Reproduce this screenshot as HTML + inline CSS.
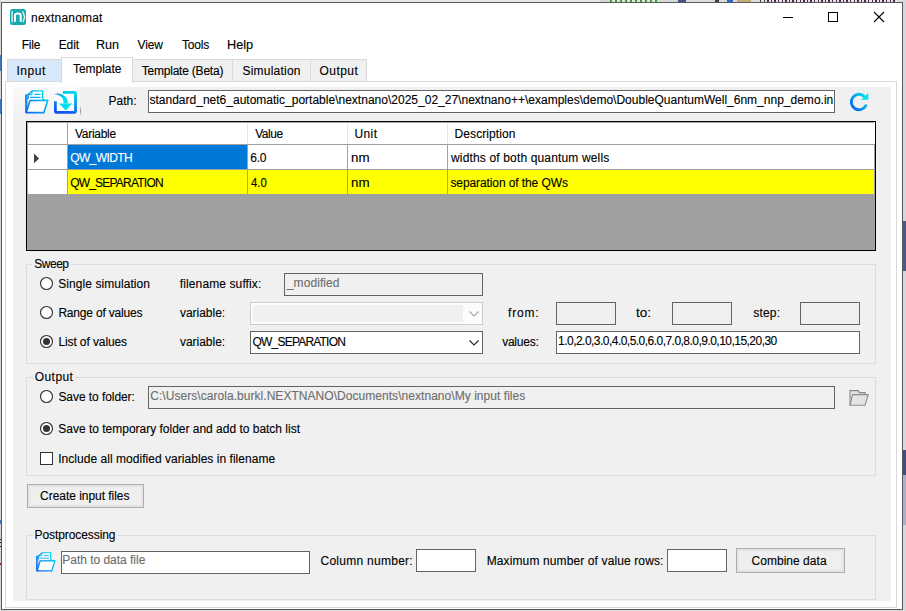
<!DOCTYPE html><html><head><meta charset="utf-8"><title>nextnanomat</title><style>
html,body{margin:0;padding:0;}
body{width:906px;height:611px;position:relative;overflow:hidden;background:#dcdde3;font-family:"Liberation Sans",sans-serif;font-size:12px;}
.t{position:absolute;white-space:nowrap;line-height:14px;font-size:12px;font-family:"Liberation Sans",sans-serif;-webkit-text-stroke:0.12px currentColor;}
svg{position:absolute;overflow:visible}
</style></head><body>
<div style="position:absolute;left:0px;top:0px;width:906px;height:2px;background:#e6e6e6"></div>
<div style="position:absolute;left:600px;top:0px;width:10px;height:2px;background:#d4d4d4"></div>
<div style="position:absolute;left:610px;top:0px;width:47px;height:2px;background:repeating-linear-gradient(90deg,#3f9a3f 0 2px,#dfe9df 2px 5px)"></div>
<div style="position:absolute;left:657px;top:0px;width:21px;height:2px;background:#d8d8d8"></div>
<div style="position:absolute;left:678px;top:0px;width:8px;height:2px;background:#45558a"></div>
<div style="position:absolute;left:686px;top:0px;width:29px;height:2px;background:#dcdcdc"></div>
<div style="position:absolute;left:715px;top:0px;width:4px;height:2px;background:#404040"></div>
<div style="position:absolute;left:719px;top:0px;width:8px;height:2px;background:#dcdcdc"></div>
<div style="position:absolute;left:727px;top:0px;width:6px;height:2px;background:#2a6ad0"></div>
<div style="position:absolute;left:733px;top:0px;width:4px;height:2px;background:#dcdcdc"></div>
<div style="position:absolute;left:737px;top:0px;width:14px;height:2px;background:#c4ac74"></div>
<div style="position:absolute;left:751px;top:0px;width:9px;height:2px;background:#dcdcdc"></div>
<div style="position:absolute;left:760px;top:0px;width:137px;height:2px;background:repeating-linear-gradient(90deg,#4a2a4a 0 1.5px,#e6e6e6 1.5px 3.6px)"></div>
<div style="position:absolute;left:897px;top:0px;width:9px;height:2px;background:#dcdcdc"></div>
<div style="position:absolute;left:903px;top:0px;width:3px;height:611px;background:#d6d7de"></div>
<div style="position:absolute;left:903px;top:221px;width:3px;height:50px;background:#4a5a8c"></div>
<div style="position:absolute;left:903px;top:450px;width:3px;height:25px;background:#3f4f86"></div>
<div style="position:absolute;left:903px;top:475px;width:3px;height:50px;background:#aab0cc"></div>
<div style="position:absolute;left:0px;top:610px;width:906px;height:1px;background:#d8d8d8"></div>
<div style="position:absolute;left:0px;top:0px;width:1px;height:611px;background:#d4d4d4"></div>
<div style="position:absolute;left:0px;top:55px;width:1px;height:16px;background:#3a78c0"></div>
<div style="position:absolute;left:0px;top:99px;width:1px;height:15px;background:#3a78c0"></div>
<div style="position:absolute;left:0px;top:520px;width:1px;height:4px;background:#3a78c0"></div>
<div style="position:absolute;left:0px;top:539px;width:1px;height:1px;background:#202020"></div>
<div style="position:absolute;left:0px;top:542px;width:1px;height:1px;background:#202020"></div>
<div style="position:absolute;left:0px;top:546px;width:1px;height:1px;background:#202020"></div>
<div style="position:absolute;left:0px;top:563px;width:1px;height:2px;background:#a02020"></div>
<div style="position:absolute;left:1px;top:2px;width:902px;height:608px;box-sizing:border-box;border:1px solid #5a5a5a;background:#ffffff"></div>
<svg style="left:10px;top:9px" width="16" height="16" viewBox="10 9 16 16">
<rect x="10" y="9" width="16" height="16" rx="2.5" fill="#17a8b0"/>
<rect x="11.3" y="11.1" width="1.6" height="11.3" fill="#fff" opacity="0.75"/>
<path d="M15 21.8 V15.2 C15 13.9 15.8 13.6 17.85 13.6 C19.9 13.6 20.7 13.9 20.7 15.2 V21.8" fill="none" stroke="#fff" stroke-width="2"/>
<path d="M22.5 11.4 Q24 14 24.5 16.8 Q24 19.8 23 22.3" fill="none" stroke="#fff" stroke-width="1.3" opacity="0.9"/>
</svg>
<div class="t" style="left:31.06px;top:11px;color:#000;letter-spacing:0.198px;">nextnanomat</div>
<div style="position:absolute;left:783px;top:17px;width:10px;height:1px;background:#000"></div>
<div style="position:absolute;left:828px;top:12px;width:10px;height:10px;box-sizing:border-box;border:1px solid #000;background:transparent"></div>
<svg style="left:873px;top:11px" width="12" height="12" viewBox="873 11 12 12">
<path d="M874 12 L884 22 M884 12 L874 22" stroke="#000" stroke-width="1.1" fill="none"/></svg>
<div class="t" style="left:21.7px;top:38px;color:#000;letter-spacing:-0.189px;">File</div>
<div class="t" style="left:58.7px;top:38px;color:#000;letter-spacing:-0.081px;">Edit</div>
<div class="t" style="left:96.45px;top:38px;color:#000;transform:scaleX(1.0468);transform-origin:0 0;">Run</div>
<div class="t" style="left:137.47px;top:38px;color:#000;letter-spacing:-0.111px;">View</div>
<div class="t" style="left:181.97px;top:38px;color:#000;letter-spacing:-0.174px;">Tools</div>
<div class="t" style="left:226.93px;top:38px;color:#000;transform:scaleX(1.0613);transform-origin:0 0;">Help</div>
<div style="position:absolute;left:5px;top:81px;width:892px;height:527px;box-sizing:border-box;border:1px solid #d9d9d9;background:#ffffff"></div>
<div style="position:absolute;left:7px;top:59px;width:55px;height:23px;box-sizing:border-box;border:1px solid #d9d9d9;background:#d8eaf9"></div>
<div style="position:absolute;left:132px;top:59px;width:101px;height:23px;box-sizing:border-box;border:1px solid #d9d9d9;background:#f0f0f0"></div>
<div style="position:absolute;left:232px;top:59px;width:79px;height:23px;box-sizing:border-box;border:1px solid #d9d9d9;background:#f0f0f0"></div>
<div style="position:absolute;left:310px;top:59px;width:57px;height:23px;box-sizing:border-box;border:1px solid #d9d9d9;background:#f0f0f0"></div>
<div style="position:absolute;left:61px;top:57px;width:72px;height:26px;box-sizing:border-box;border:1px solid #d9d9d9;border-bottom:none;background:#fff"></div>
<div class="t" style="left:16.46px;top:64px;color:#000;letter-spacing:0.523px;">Input</div>
<div class="t" style="left:72.97px;top:62px;color:#000;letter-spacing:-0.030px;">Template</div>
<div class="t" style="left:141.67px;top:64px;color:#000;letter-spacing:-0.208px;">Template (Beta)</div>
<div class="t" style="left:242.43px;top:64px;color:#000;letter-spacing:0.223px;">Simulation</div>
<div class="t" style="left:319.45px;top:64px;color:#000;letter-spacing:0.473px;">Output</div>
<div style="position:absolute;left:13px;top:87px;width:878px;height:514px;background:#f0f0f0"></div>
<div style="position:absolute;left:13px;top:87px;width:67px;height:33px;background:linear-gradient(#fafafa,#f0f0f0)"></div>
<div style="position:absolute;left:80px;top:106px;width:1px;height:10px;background:linear-gradient(#f0f0f0,#8c8c8c,#f0f0f0)"></div>
<svg width="0" height="0" style="left:0;top:0">
<defs>
<linearGradient id="gf" gradientUnits="userSpaceOnUse" x1="0" y1="24" x2="24" y2="0">
<stop offset="0" stop-color="#0a5cf6"/><stop offset="1" stop-color="#00e8ee"/></linearGradient>
<linearGradient id="gi" gradientUnits="userSpaceOnUse" x1="8" y1="23" x2="14" y2="1">
<stop offset="0" stop-color="#0a52f4"/><stop offset="0.45" stop-color="#0a8af2"/><stop offset="1" stop-color="#00d8f0"/></linearGradient>
<linearGradient id="ga" gradientUnits="userSpaceOnUse" x1="0" y1="3" x2="12" y2="14">
<stop offset="0" stop-color="#1a6cf5"/><stop offset="0.6" stop-color="#00d6f0"/><stop offset="1" stop-color="#00e6ee"/></linearGradient>
<linearGradient id="gr" gradientUnits="userSpaceOnUse" x1="851" y1="110" x2="868" y2="94">
<stop offset="0" stop-color="#0a5cf6"/><stop offset="1" stop-color="#00e8ee"/></linearGradient>
<symbol id="folder" viewBox="0 0 24 24">
<path d="M0.5 9.9 L1 5.2 L3 4.9" fill="none" stroke="url(#gf)" stroke-width="1.6"/>
<rect x="0.3" y="5" width="2.6" height="18.4" fill="#5b9bf6" opacity="0.75"/>
<path d="M3.2 9 V4.6 L7.2 0.9 H17.6 V8.8" fill="#fff" stroke="url(#gf)" stroke-width="1.4"/>
<path d="M3.3 4.6 L7 4.6 L7 1" fill="none" stroke="url(#gf)" stroke-width="1"/>
<path d="M9.5 4.4 H15.6 M5.1 7.4 H15.6" stroke="url(#gf)" stroke-width="1.1"/>
<path d="M1 5.2 V22.6" stroke="url(#gf)" stroke-width="1.6"/>
<path d="M17.6 8.8 L19 10" stroke="url(#gf)" stroke-width="1.4"/>
<path d="M5 10.6 L22.8 10.3 L18.9 22.6 L1.3 22.6 Z" fill="#fff" stroke="url(#gf)" stroke-width="1.6" stroke-linejoin="round"/>
</symbol>
</defs></svg>
<svg style="left:25px;top:90px" width="24" height="24"><use href="#folder" width="24" height="24"/></svg>
<svg style="left:54px;top:90px" width="24" height="24" viewBox="0 0 24 24">
<path d="M0.3 4.6 C3 3.3 6 2.6 9 1 L22.9 1 L22.9 23.7 L0.3 23.7 Z" fill="#fff"/>
<path d="M8.9 2.4 H20.1 Q21.5 2.4 21.5 3.8 V20.9 Q21.5 22.3 20.1 22.3 H2.8 Q1.4 22.3 1.4 20.9 V11.3" fill="none" stroke="url(#gi)" stroke-width="2.8"/>
<path d="M0.05 4.6 C2 3.1 5 2.8 9.5 5.2 C12.5 6.8 14.05 9.5 14.05 13.6 L9.7 13.6 C9.7 10 8.5 7.5 6 5.9 C4 4.6 2 4.3 0.05 4.6 Z" fill="url(#ga)"/>
<path d="M5 13.4 L18.3 13.4 L11.7 20.5 Z" fill="#00e2ef"/>
</svg>
<div class="t" style="left:108.59px;top:94px;color:#000;letter-spacing:-0.016px;">Path:</div>
<div style="position:absolute;left:148px;top:90px;width:687px;height:23px;box-sizing:border-box;border:1px solid #646464;background:#fff"></div>
<div class="t" style="left:149.45px;top:93px;color:#000;letter-spacing:0.008px;">standard_net6_automatic_portable\nextnano\2025_02_27\nextnano++\examples\demo\DoubleQuantumWell_6nm_nnp_demo.in</div>
<svg style="left:846px;top:90px" width="26" height="26" viewBox="846 90 26 26">
<path d="M865.9 105.6 A7.75 7.75 0 1 1 864.5 96.5" fill="none" stroke="url(#gr)" stroke-width="2.8" stroke-linecap="round"/>
<path d="M868.3 93 L868.3 99.8 L861.1 99.8 Z" fill="#00e4ee"/>
</svg>
<div style="position:absolute;left:26px;top:121px;width:850px;height:130px;box-sizing:border-box;border:1px solid #000;background:#a0a0a0"></div>
<div style="position:absolute;left:27px;top:122px;width:848px;height:22px;background:#fff"></div>
<div style="position:absolute;left:27px;top:144px;width:848px;height:1px;background:#a0a0a0"></div>
<div style="position:absolute;left:27px;top:145px;width:40px;height:49px;background:#fff"></div>
<div style="position:absolute;left:68px;top:145px;width:179px;height:24px;background:#0078d7"></div>
<div style="position:absolute;left:248px;top:145px;width:627px;height:24px;background:#fff"></div>
<div style="position:absolute;left:68px;top:170px;width:807px;height:24px;background:#ffff00"></div>
<div style="position:absolute;left:27px;top:169px;width:848px;height:1px;background:#a0a0a0"></div>
<div style="position:absolute;left:27px;top:194px;width:848px;height:1px;background:#a0a0a0"></div>
<div style="position:absolute;left:67px;top:122px;width:1px;height:72px;background:#a0a0a0"></div>
<div style="position:absolute;left:27px;top:122px;width:847px;height:1px;background:#ababab"></div>
<div style="position:absolute;left:27px;top:122px;width:1px;height:72px;background:#ababab"></div>
<div style="position:absolute;left:247px;top:145px;width:1px;height:49px;background:#a0a0a0"></div>
<div style="position:absolute;left:347px;top:145px;width:1px;height:49px;background:#a0a0a0"></div>
<div style="position:absolute;left:447px;top:145px;width:1px;height:49px;background:#a0a0a0"></div>
<div style="position:absolute;left:874px;top:145px;width:1px;height:49px;background:#a0a0a0"></div>
<div style="position:absolute;left:247px;top:124px;width:1px;height:20px;background:#e5e5e5"></div>
<div style="position:absolute;left:347px;top:124px;width:1px;height:20px;background:#e5e5e5"></div>
<div style="position:absolute;left:447px;top:124px;width:1px;height:20px;background:#e5e5e5"></div>
<svg style="left:33px;top:153px" width="8" height="11" viewBox="33 153 8 11"><path d="M34 153.6 L39.1 158.4 L34 163.2 Z" fill="#404040"/></svg>
<div class="t" style="left:75.07px;top:127px;color:#000;letter-spacing:-0.304px;">Variable</div>
<div class="t" style="left:255.17px;top:127px;color:#000;letter-spacing:-0.441px;">Value</div>
<div class="t" style="left:354.56px;top:127px;color:#000;letter-spacing:0.359px;">Unit</div>
<div class="t" style="left:454.6px;top:127px;color:#000;letter-spacing:0.084px;">Description</div>
<div class="t" style="left:70.15px;top:151px;color:#fff;letter-spacing:-0.599px;">QW_WIDTH</div>
<div class="t" style="left:250.23px;top:151px;color:#000;letter-spacing:-0.200px;">6.0</div>
<div class="t" style="left:350.75px;top:151px;color:#000;transform:scaleX(1.1136);transform-origin:0 0;">nm</div>
<div class="t" style="left:451.04px;top:151px;color:#000;letter-spacing:0.153px;">widths of both quantum wells</div>
<div class="t" style="left:70.15px;top:176px;color:#000;letter-spacing:-0.788px;">QW_SEPARATION</div>
<div class="t" style="left:250.76px;top:176px;color:#000;transform:scaleX(0.9420);transform-origin:0 0;">4.0</div>
<div class="t" style="left:350.75px;top:176px;color:#000;transform:scaleX(1.1136);transform-origin:0 0;">nm</div>
<div class="t" style="left:450.45px;top:176px;color:#000;letter-spacing:-0.097px;">separation of the QWs</div>
<div style="position:absolute;left:26px;top:264px;width:850px;height:100px;box-sizing:border-box;border:1px solid #dcdcdc"></div>
<div style="position:absolute;left:32px;top:264px;width:39px;height:1px;background:#f0f0f0"></div>
<div class="t" style="left:34.23px;top:257px;color:#000;letter-spacing:-0.479px;">Sweep</div>
<svg style="left:40px;top:277px" width="13" height="13" viewBox="0 0 13 13"><circle cx="6.5" cy="6.5" r="6" fill="#fff" stroke="#333" stroke-width="1.15"/></svg>
<svg style="left:40px;top:306px" width="13" height="13" viewBox="0 0 13 13"><circle cx="6.5" cy="6.5" r="6" fill="#fff" stroke="#333" stroke-width="1.15"/></svg>
<svg style="left:40px;top:335px" width="13" height="13" viewBox="0 0 13 13"><circle cx="6.5" cy="6.5" r="6" fill="#fff" stroke="#333" stroke-width="1.15"/><circle cx="6.5" cy="6.5" r="3.5" fill="#333"/></svg>
<div class="t" style="left:58.23px;top:277px;color:#000;letter-spacing:0.067px;">Single simulation</div>
<div class="t" style="left:58.39px;top:306px;color:#000;letter-spacing:-0.190px;">Range of values</div>
<div class="t" style="left:58.39px;top:335px;color:#000;letter-spacing:-0.102px;">List of values</div>
<div class="t" style="left:179.86px;top:277px;color:#000;letter-spacing:0.106px;">filename suffix:</div>
<div class="t" style="left:179.98px;top:306px;color:#000;letter-spacing:-0.022px;">variable:</div>
<div class="t" style="left:179.98px;top:335px;color:#000;letter-spacing:-0.022px;">variable:</div>
<div style="position:absolute;left:284px;top:273px;width:199px;height:23px;box-sizing:border-box;border:1px solid #646464;background:#f0f0f0"></div>
<div class="t" style="left:286.86px;top:276px;color:#6d6d6d;letter-spacing:0.077px;">_modified</div>
<div style="position:absolute;left:250px;top:302px;width:233px;height:23px;box-sizing:border-box;border:1px solid #cccccc;background:#fcfcfc"></div>
<div style="position:absolute;left:253px;top:305px;width:210px;height:17px;background:#f0f0f0"></div>
<svg style="left:469px;top:311px" width="10" height="6" viewBox="0 0 10 6"><path d="M0.5 0.5 L5 5 L9.5 0.5" fill="none" stroke="#a8a8a8" stroke-width="1.1"/></svg>
<div style="position:absolute;left:250px;top:331px;width:233px;height:23px;box-sizing:border-box;border:1px solid #646464;background:#fff"></div>
<div class="t" style="left:252.55px;top:335px;color:#000;letter-spacing:-0.800px;">QW_SEPARATION</div>
<svg style="left:469px;top:340px" width="10" height="6" viewBox="0 0 10 6"><path d="M0.5 0.5 L5 5 L9.5 0.5" fill="none" stroke="#222" stroke-width="1.1"/></svg>
<div class="t" style="left:508.06px;top:306px;color:#000;letter-spacing:0.800px;">from:</div>
<div class="t" style="left:635.63px;top:306px;color:#000;transform:scaleX(1.1219);transform-origin:0 0;">to:</div>
<div class="t" style="left:753.25px;top:306px;color:#000;letter-spacing:0.195px;">step:</div>
<div class="t" style="left:502.18px;top:335px;color:#000;letter-spacing:-0.241px;">values:</div>
<div style="position:absolute;left:556px;top:302px;width:60px;height:23px;box-sizing:border-box;border:1px solid #646464;background:#f0f0f0"></div>
<div style="position:absolute;left:672px;top:302px;width:60px;height:23px;box-sizing:border-box;border:1px solid #646464;background:#f0f0f0"></div>
<div style="position:absolute;left:800px;top:302px;width:60px;height:23px;box-sizing:border-box;border:1px solid #646464;background:#f0f0f0"></div>
<div style="position:absolute;left:556px;top:331px;width:304px;height:23px;box-sizing:border-box;border:1px solid #646464;background:#fff"></div>
<div class="t" style="left:558.04px;top:334px;color:#000;letter-spacing:-0.528px;">1.0,2.0,3.0,4.0,5.0,6.0,7.0,8.0,9.0,10,15,20,30</div>
<div style="position:absolute;left:26px;top:377px;width:850px;height:99px;box-sizing:border-box;border:1px solid #dcdcdc"></div>
<div style="position:absolute;left:33px;top:377px;width:42px;height:1px;background:#f0f0f0"></div>
<div class="t" style="left:34.75px;top:370px;color:#000;letter-spacing:0.433px;">Output</div>
<svg style="left:40px;top:390px" width="13" height="13" viewBox="0 0 13 13"><circle cx="6.5" cy="6.5" r="6" fill="#fff" stroke="#333" stroke-width="1.15"/></svg>
<svg style="left:40px;top:422px" width="13" height="13" viewBox="0 0 13 13"><circle cx="6.5" cy="6.5" r="6" fill="#fff" stroke="#333" stroke-width="1.15"/><circle cx="6.5" cy="6.5" r="3.5" fill="#333"/></svg>
<div style="position:absolute;left:40px;top:452px;width:13px;height:13px;box-sizing:border-box;border:1px solid #333;background:#fff"></div>
<div class="t" style="left:58.43px;top:390px;color:#000;letter-spacing:-0.066px;">Save to folder:</div>
<div style="position:absolute;left:148px;top:386px;width:687px;height:23px;box-sizing:border-box;border:1px solid #646464;background:#f0f0f0"></div>
<div class="t" style="left:150.27px;top:389px;color:#6d6d6d;letter-spacing:0.046px;">C:\Users\carola.burkl.NEXTNANO\Documents\nextnano\My input files</div>
<svg style="left:845px;top:385px" width="28" height="26" viewBox="845 385 28 26">
<path d="M850 405.2 V390.6 H858.3 L859.5 392.6 H865.2 V394.6" fill="#e4e4e4" stroke="#8a8a8a" stroke-width="1.1"/>
<path d="M852.6 394.6 H868.3 L865 405.2 H850 Z" fill="#e4e4e4" stroke="#8a8a8a" stroke-width="1.1" stroke-linejoin="round"/>
</svg>
<div class="t" style="left:58.33px;top:422px;color:#000;letter-spacing:-0.011px;">Save to temporary folder and add to batch list</div>
<div class="t" style="left:58.16px;top:452px;color:#000;letter-spacing:0.038px;">Include all modified variables in filename</div>
<div style="position:absolute;left:27px;top:484px;width:117px;height:24px;box-sizing:border-box;border:1px solid #adadad;background:#efefef;box-shadow:inset 0 0 0 2px #e3e3e3"></div>
<div class="t" style="left:40.07px;top:489px;color:#000;letter-spacing:-0.041px;">Create input files</div>
<div style="position:absolute;left:26px;top:535px;width:850px;height:65px;box-sizing:border-box;border:1px solid #dcdcdc"></div>
<div style="position:absolute;left:33px;top:535px;width:84px;height:1px;background:#f0f0f0"></div>
<div class="t" style="left:34.59px;top:528px;color:#000;letter-spacing:-0.087px;">Postprocessing</div>
<svg style="left:36px;top:552px" width="20" height="20"><use href="#folder" width="20" height="20"/></svg>
<div style="position:absolute;left:61px;top:551px;width:249px;height:23px;box-sizing:border-box;border:1px solid #646464;background:#fff"></div>
<div class="t" style="left:62.29px;top:553px;color:#6d6d6d;letter-spacing:-0.023px;">Path to data file</div>
<div class="t" style="left:320.47px;top:554px;color:#000;letter-spacing:0.270px;">Column number:</div>
<div style="position:absolute;left:416px;top:549px;width:60px;height:23px;box-sizing:border-box;border:1px solid #646464;background:#fff"></div>
<div class="t" style="left:486.69px;top:554px;color:#000;letter-spacing:0.118px;">Maximum number of value rows:</div>
<div style="position:absolute;left:667px;top:549px;width:60px;height:23px;box-sizing:border-box;border:1px solid #646464;background:#fff"></div>
<div style="position:absolute;left:736px;top:548px;width:109px;height:25px;box-sizing:border-box;border:1px solid #adadad;background:#efefef;box-shadow:inset 0 0 0 2px #e3e3e3"></div>
<div class="t" style="left:751.57px;top:554px;color:#000;letter-spacing:0.025px;">Combine data</div>
</body></html>
